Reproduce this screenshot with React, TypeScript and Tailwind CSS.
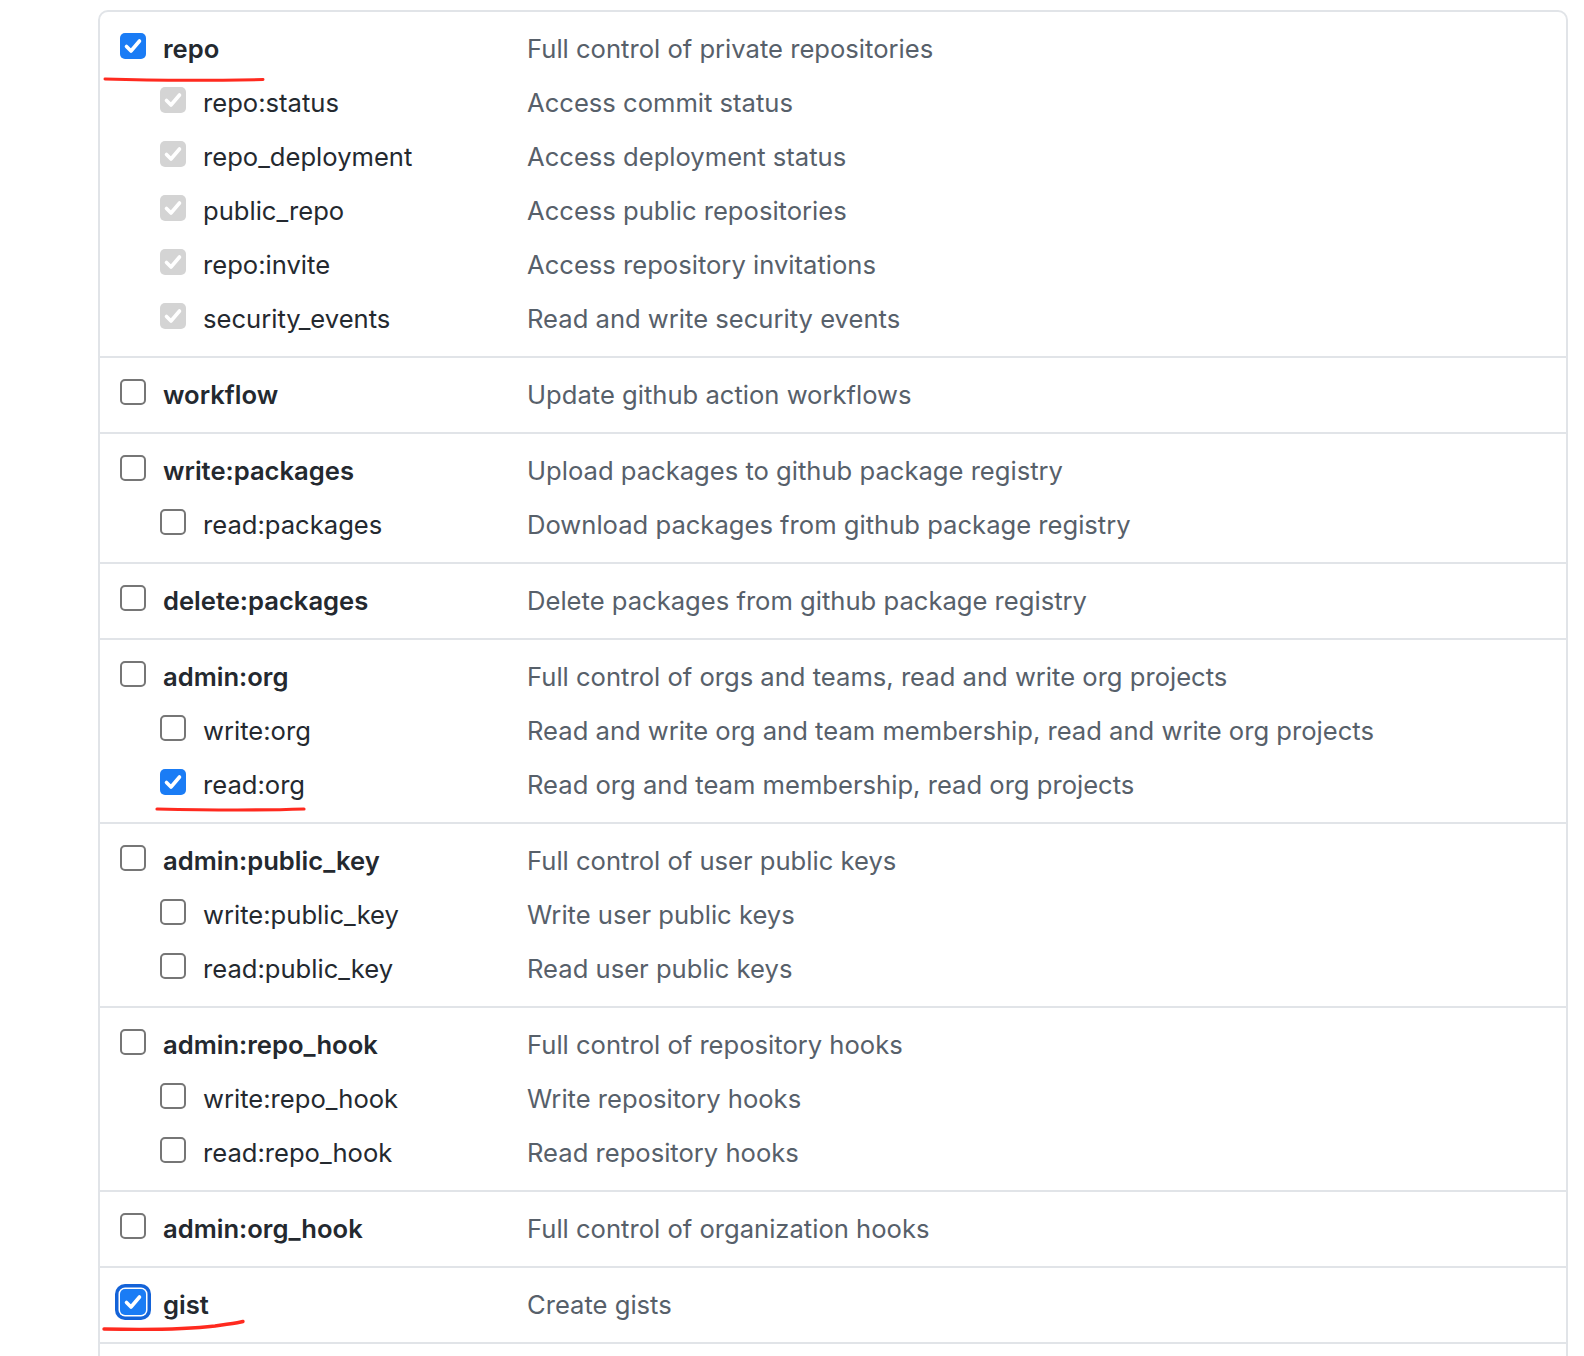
import React from 'react';

type Scope = {
  name: string;
  desc: string;
  state?: 'checked' | 'disabled' | 'focus';
  sub?: boolean;
};

const groups: Scope[][] = [
  [
    { name: 'repo', desc: 'Full control of private repositories', state: 'checked' },
    { name: 'repo:status', desc: 'Access commit status', state: 'disabled', sub: true },
    { name: 'repo_deployment', desc: 'Access deployment status', state: 'disabled', sub: true },
    { name: 'public_repo', desc: 'Access public repositories', state: 'disabled', sub: true },
    { name: 'repo:invite', desc: 'Access repository invitations', state: 'disabled', sub: true },
    { name: 'security_events', desc: 'Read and write security events', state: 'disabled', sub: true },
  ],
  [{ name: 'workflow', desc: 'Update github action workflows' }],
  [
    { name: 'write:packages', desc: 'Upload packages to github package registry' },
    { name: 'read:packages', desc: 'Download packages from github package registry', sub: true },
  ],
  [{ name: 'delete:packages', desc: 'Delete packages from github package registry' }],
  [
    { name: 'admin:org', desc: 'Full control of orgs and teams, read and write org projects' },
    { name: 'write:org', desc: 'Read and write org and team membership, read and write org projects', sub: true },
    { name: 'read:org', desc: 'Read org and team membership, read org projects', state: 'checked', sub: true },
  ],
  [
    { name: 'admin:public_key', desc: 'Full control of user public keys' },
    { name: 'write:public_key', desc: 'Write user public keys', sub: true },
    { name: 'read:public_key', desc: 'Read user public keys', sub: true },
  ],
  [
    { name: 'admin:repo_hook', desc: 'Full control of repository hooks' },
    { name: 'write:repo_hook', desc: 'Write repository hooks', sub: true },
    { name: 'read:repo_hook', desc: 'Read repository hooks', sub: true },
  ],
  [{ name: 'admin:org_hook', desc: 'Full control of organization hooks' }],
  [{ name: 'gist', desc: 'Create gists', state: 'focus' }],
];

const Check = () => (
  <svg width="26" height="26" viewBox="0 0 26 26" fill="none">
    <path d="M6.5 13.5l4.5 4.5 8.5-10" stroke="white" strokeWidth="3.6" strokeLinecap="round" strokeLinejoin="round" />
  </svg>
);

const Box = ({ state }: { state?: Scope['state'] }) => {
  if (state === 'checked') {
    return (
      <div className="w-[26px] h-[26px] mb-[7px] rounded-[5px] bg-[#1a7cf5] shrink-0">
        <Check />
      </div>
    );
  }
  if (state === 'focus') {
    return (
      <div className="w-[26px] h-[26px] mb-[7px] rounded-[5px] bg-[#1a7cf5] shrink-0 shadow-[0_0_0_1.5px_#ffffff,0_0_0_5px_#1463d8]">
        <Check />
      </div>
    );
  }
  if (state === 'disabled') {
    return (
      <div className="w-[26px] h-[26px] mb-[7px] rounded-[5px] bg-[#d4d4d4] shrink-0">
        <Check />
      </div>
    );
  }
  return <div className="w-[26px] h-[26px] mb-[7px] rounded-[5px] border-2 border-[#767676] bg-white shrink-0" />;
};

const Row = ({ s }: { s: Scope }) => (
  <div className="flex items-center h-[54px]">
    <div className={`flex items-center w-[407px] shrink-0 ${s.sub ? 'pl-[40px]' : ''}`}>
      <Box state={s.state} />
      <span className={`ml-[17px] text-[#24292f] ${s.sub ? 'font-normal' : 'font-semibold'}`}>{s.name}</span>
    </div>
    <span className="text-[#57606a]">{s.desc}</span>
  </div>
);

const App: React.FC = () => {
  return (
    <div
      className="relative h-[1356px] overflow-hidden bg-white pt-[10px] pl-[98px] text-[25.6px] leading-[32px]"
      style={{ fontFamily: 'Inter, "Noto Sans", sans-serif' }}
    >
      <div className="w-[1470px] border-2 border-[#e1e4e8] rounded-[10px]">
        {groups.map((g, i) => (
          <div key={i} className={`py-[10px] pl-[20px] ${i > 0 ? 'border-t-2 border-[#e1e4e8]' : ''}`}>
            {g.map((s) => (
              <Row key={s.name} s={s} />
            ))}
          </div>
        ))}
        <div className="h-[40px] border-t-2 border-[#e1e4e8]" />
      </div>

      {/* red marker underlines */}
      <svg className="absolute left-0 top-0 pointer-events-none" width="1584" height="1356" fill="none">
        <path d="M105 79 C150 80.5 220 80.5 263 79.5" stroke="#ff2a1f" strokeWidth="3" strokeLinecap="round" />
        <path d="M157 809 C200 810 260 810.5 304 809" stroke="#ff2a1f" strokeWidth="3.2" strokeLinecap="round" />
        <path d="M104 1329 C150 1330 190 1329 215 1326 C228 1324 238 1323 243 1321.5" stroke="#ff2a1f" strokeWidth="3.4" strokeLinecap="round" />
      </svg>
    </div>
  );
};

export default App;
